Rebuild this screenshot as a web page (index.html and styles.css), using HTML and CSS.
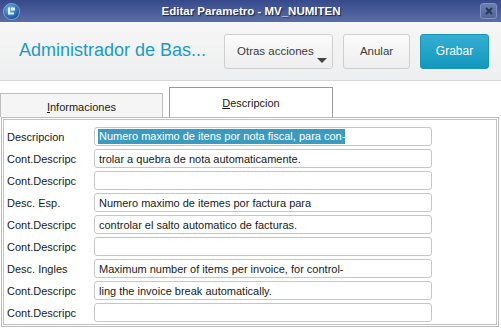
FILE: index.html
```html
<!DOCTYPE html>
<html>
<head>
<meta charset="utf-8">
<link rel="stylesheet" href="styles.css">
</head>
<body>
<div class="window">
  <div class="titlebar">
    <div class="app-icon">
      <svg width="17" height="17" viewBox="0 0 17 17">
        <defs>
          <radialGradient id="g" cx="40%" cy="35%" r="65%">
            <stop offset="0" stop-color="#6fb6ec"/>
            <stop offset="1" stop-color="#12509a"/>
          </radialGradient>
        </defs>
        <circle cx="8.5" cy="8.5" r="8" fill="url(#g)" stroke="#9db4d8" stroke-width="0.8"/>
        <path d="M5 4.5 h2 v5 h4 v2 h-6 z" fill="#e8f2ff"/>
        <rect x="8" y="4.5" width="4" height="3" fill="#e8f2ff"/>
      </svg>
    </div>
    <div class="title">Editar Parametro - MV_NUMITEN</div>
    <div class="close">
      <svg width="8" height="8" viewBox="0 0 8 8"><path d="M1 1 L7 7 M7 1 L1 7" stroke="#2b3550" stroke-width="2"/></svg>
    </div>
  </div>
  <div class="header">
    <div class="header-title">Administrador de Bas...</div>
    <button class="btn btn-menu">Otras acciones<span class="caret"></span></button>
    <button class="btn btn-cancel">Anular</button>
    <button class="btn btn-primary">Grabar</button>
  </div>
  <div class="tabs">
    <div class="tab"><u>I</u>nformaciones</div>
    <div class="tab active"><u>D</u>escripcion</div>
  </div>
  <div class="panel">
    <div class="row"><span class="label">Descripcion</span><div class="input"><span class="sel">Numero maximo de itens por nota fiscal, para con-</span></div></div>
    <div class="row"><span class="label">Cont.Descripc</span><div class="input">trolar a quebra de nota automaticamente.</div></div>
    <div class="row"><span class="label">Cont.Descripc</span><div class="input"></div></div>
    <div class="row"><span class="label">Desc. Esp.</span><div class="input">Numero maximo de itemes por factura para</div></div>
    <div class="row"><span class="label">Cont.Descripc</span><div class="input">controlar el salto automatico de facturas.</div></div>
    <div class="row"><span class="label">Cont.Descripc</span><div class="input"></div></div>
    <div class="row"><span class="label">Desc. Ingles</span><div class="input">Maximum number of items per invoice, for control-</div></div>
    <div class="row"><span class="label">Cont.Descripc</span><div class="input">ling the invoice break automatically.</div></div>
    <div class="row"><span class="label">Cont.Descripc</span><div class="input"></div></div>
  </div>
</div>
</body>
</html>
```
FILE: styles.css
```css
* { box-sizing: border-box; }
html, body { margin: 0; padding: 0; }
body {
  width: 501px;
  height: 329px;
  overflow: hidden;
  background: #ffffff;
  font-family: "Liberation Sans", Arial, sans-serif;
  font-size: 11px;
  color: #1a1a1a;
}
.window { width: 501px; height: 329px; display: flex; flex-direction: column; }
.titlebar {
  height: 22px;
  flex: none;
  display: flex;
  align-items: center;
  padding: 0 4px 0 3px;
  background: linear-gradient(#36498a, #5a6da6);
}
.app-icon { width: 17px; height: 17px; display: flex; }
.title {
  flex: 1;
  text-align: center;
  color: #ffffff;
  font-family: "Liberation Sans", Arial, sans-serif;
  font-weight: bold;
  font-size: 11.5px;
  padding-left: 2px;
  text-shadow: 1px 1px 1px #1a2240;
}
.close {
  width: 17px;
  height: 16px;
  border: 1px solid #8291bd;
  border-radius: 3px;
  background: linear-gradient(#6d7eb2, #53649c);
  display: flex;
  align-items: center;
  justify-content: center;
}
.header {
  height: 59px;
  flex: none;
  display: flex;
  align-items: center;
  padding: 0 12px 0 19px;
  background: linear-gradient(#f6f6f6, #eeeff0);
  border-bottom: 1px solid #d6d6d6;
}
.header-title {
  flex: 1 0 auto;
  white-space: nowrap;
  font-size: 18px;
  color: #1c9bc6;
  padding-bottom: 1px;
}
.btn {
  flex: none;
  height: 35px;
  margin-top: 1px;
  border: 1px solid #cfcfcf;
  border-radius: 3px;
  background: linear-gradient(#fbfbfb, #eeeeee);
  font-family: "Liberation Sans", Arial, sans-serif;
  font-size: 11.5px;
  color: #3a3a3a;
  padding: 0;
}
.btn-menu {
  width: 109px;
  position: relative;
  text-align: left;
  padding-left: 12px;
  padding-bottom: 2px;
}
.caret {
  position: absolute;
  right: 5px;
  bottom: 5px;
  width: 0;
  height: 0;
  border-left: 5px solid transparent;
  border-right: 5px solid transparent;
  border-top: 5px solid #444;
}
.btn-cancel { width: 67px; margin-left: 10px; padding-bottom: 2px; }
.btn-primary {
  width: 69px;
  margin-left: 10px;
  border-color: #1a93b8;
  background: linear-gradient(#35aed2, #1397bd);
  color: #ffffff;
  font-size: 12px;
  padding-bottom: 2px;
}
.tabs {
  flex: none;
  display: flex;
  align-items: flex-end;
  gap: 6px;
  margin-top: 6px;
  height: 30px;
}
.tab {
  width: 163px;
  height: 24px;
  border: 1px solid #bdbdbd;
  border-bottom: none;
  background: #f5f5f5;
  display: flex;
  align-items: center;
  justify-content: center;
  padding-top: 2px;
  color: #1a1a1a;
}
.tab.active {
  width: 164px;
  height: 30px;
  background: #ffffff;
  border-color: #9a9a9a;
  padding-top: 0;
}
.tab u { text-decoration-thickness: 1px; }
.panel {
  margin-left: 1px;
  width: 498px;
  flex: 1;
  margin-bottom: 2px;
  border: 1px solid #bdbdbd;
  box-shadow: inset 0 0 0 1px #ffffff, inset 0 0 0 2px #c4c4c4;
  padding: 9px 0 0 5px;
  display: flex;
  flex-direction: column;
  gap: 3px;
}
.row { display: flex; align-items: center; height: 19px; }
.label { width: 87px; }
.input {
  width: 338px;
  height: 19px;
  border: 1px solid #c6c6c6;
  border-radius: 3px;
  padding: 0 0 0 4px;
  display: flex;
  align-items: center;
  white-space: nowrap;
}
.sel {
  background: #3b9bbf;
  color: #ffffff;
  padding: 1px 0 2px 1px;
  margin-left: -1px;
}
```
